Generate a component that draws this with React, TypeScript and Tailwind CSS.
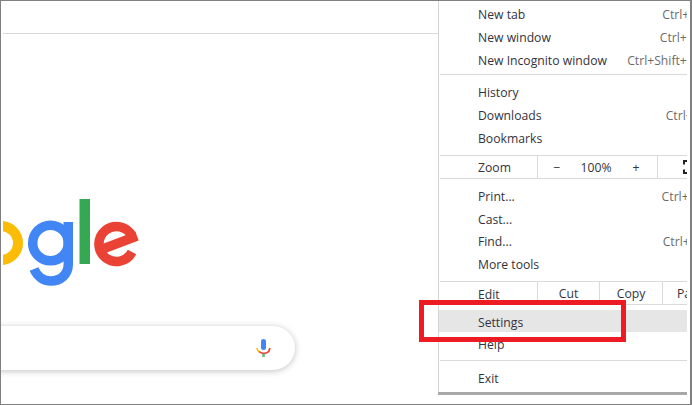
const font = { fontFamily: '"Open Sans", "Noto Sans", sans-serif' };

function Row({ label, shortcut, active }: { label: string; shortcut?: string; active?: boolean }) {
  return (
    <div className={`flex items-center justify-between whitespace-nowrap pl-[39px] ${active ? "h-[22px] bg-[#e6e6e6] pt-[3px]" : "h-[22.7px] pt-[2px]"}`}>
      <span>{label}</span>
      {shortcut && <span className="mr-[-9px] text-[#6b6b6b]">{shortcut}</span>}
    </div>
  );
}

function Cell({ w, center, children }: { w: string; center?: boolean; children: React.ReactNode }) {
  return (
    <div className={`flex shrink-0 items-center border-r border-[#dadada] ${w} ${center ? "justify-center pt-[2px]" : "pl-[38px] pt-[3px]"}`}>
      {children}
    </div>
  );
}

function Logo() {
  return (
    <svg width="140" height="90" viewBox="3 198 140 90" className="block">
      <circle cx="1" cy="243" r="17" fill="none" stroke="#fbbc05" strokeWidth="10" />
      <circle cx="50.5" cy="243" r="17.8" fill="none" stroke="#4285f4" strokeWidth="9.5" />
      <path d="M68.3 222 V264 C68.3 275 60 281 51 281 C43 281 37 276 34 269" fill="none" stroke="#4285f4" strokeWidth="9.5" />
      <rect x="79.5" y="199" width="10.5" height="65" fill="#34a853" />
      <path d="M137 236 L104 248.5" fill="none" stroke="#ea4335" strokeWidth="9.5" />
      <path d="M132 236 A17.5 17.5 0 1 0 132 252" fill="none" stroke="#ea4335" strokeWidth="9.5" />
    </svg>
  );
}

function Mic() {
  return (
    <svg width="16" height="20" viewBox="0 0 16 20" className="block">
      <rect x="6" y="1" width="5" height="11" rx="2.5" fill="#4285f4" />
      <path d="M1.8 10 C2.3 12 3 13 4.2 14" fill="none" stroke="#fbbc05" strokeWidth="1.5" />
      <path d="M4 13.6 C7 15.6 11 15.6 13.6 13.6 L15 10" fill="none" stroke="#ea4335" strokeWidth="1.7" />
      <rect x="7.2" y="15.5" width="2.6" height="3.5" fill="#34a853" opacity="0.7" />
    </svg>
  );
}

function FullscreenIcon() {
  return (
    <svg width="14" height="14" viewBox="0 0 14 14" className="ml-[25px] block shrink-0">
      <path d="M14 1H1V4.5M1 9.5V13H14M13 4.5V1M13 9.5V13" fill="none" stroke="#222" strokeWidth="2" />
    </svg>
  );
}

export default function App() {
  return (
    <div className="relative h-[405px] w-[692px] overflow-hidden border-y border-l border-r-2 border-[#808080] bg-white text-[#33333d]" style={font}>
      <div className="ml-[2px] mt-[32px] h-px w-[436px] bg-[#dadada]" />

      <div className="absolute left-[2px] top-[197px]"><Logo /></div>

      <div className="absolute left-[-40px] top-[325px] flex h-[44px] w-[334px] items-center justify-end rounded-r-[22px] bg-white pr-[24px] shadow-[0_1px_6px_rgba(32,33,36,0.28)]">
        <Mic />
      </div>

      <div className="absolute left-[437px] top-[-1px] h-[392px] w-[249px] overflow-hidden border-l border-[#d4d4d4] bg-white pt-[3px] text-[12.2px] shadow-[0_3px_0_#a8a8a8]">
        <Row label="New tab" shortcut="Ctrl+T" />
        <Row label="New window" shortcut="Ctrl+N" />
        <Row label="New Incognito window" shortcut="Ctrl+Shift+N" />
        <div className="mb-[6px] ml-px mt-[3px] h-px bg-[#dadada]" />
        <Row label="History" />
        <Row label="Downloads" shortcut="Ctrl+J" />
        <Row label="Bookmarks" />
        <div className="ml-px mt-[6px] flex h-[24px] items-stretch border-y border-[#dadada]">
          <Cell w="w-[98px]">Zoom</Cell>
          <div className="flex w-[120px] shrink-0 items-center border-r border-[#dadada] pt-[2px]">
            <span className="w-[38px] text-center">−</span>
            <span className="w-[40px] text-center">100%</span>
            <span className="w-[40px] text-center">+</span>
          </div>
          <div className="flex items-center"><FullscreenIcon /></div>
        </div>
        <div className="h-[5.5px]" />
        <Row label="Print..." shortcut="Ctrl+P" />
        <Row label="Cast..." />
        <Row label="Find..." shortcut="Ctrl+F" />
        <Row label="More tools" />
        <div className="ml-px mt-[6px] flex h-[24px] items-stretch border-y border-[#dadada]">
          <Cell w="w-[98px]">Edit</Cell>
          <Cell w="w-[62px]" center>Cut</Cell>
          <Cell w="w-[63px]" center>Copy</Cell>
          <div className="flex items-center whitespace-nowrap pl-[14px] pt-[2px]">Paste</div>
        </div>
        <div className="h-[5px]" />
        <Row label="Settings" active />
        <Row label="Help" />
        <div className="mb-[6px] ml-px mt-[4.5px] h-px bg-[#dadada]" />
        <Row label="Exit" />
      </div>

      <div className="absolute left-[418px] top-[299px] h-[42px] w-[207px] border-[5px] border-[#ed1c24]" />
    </div>
  );
}
